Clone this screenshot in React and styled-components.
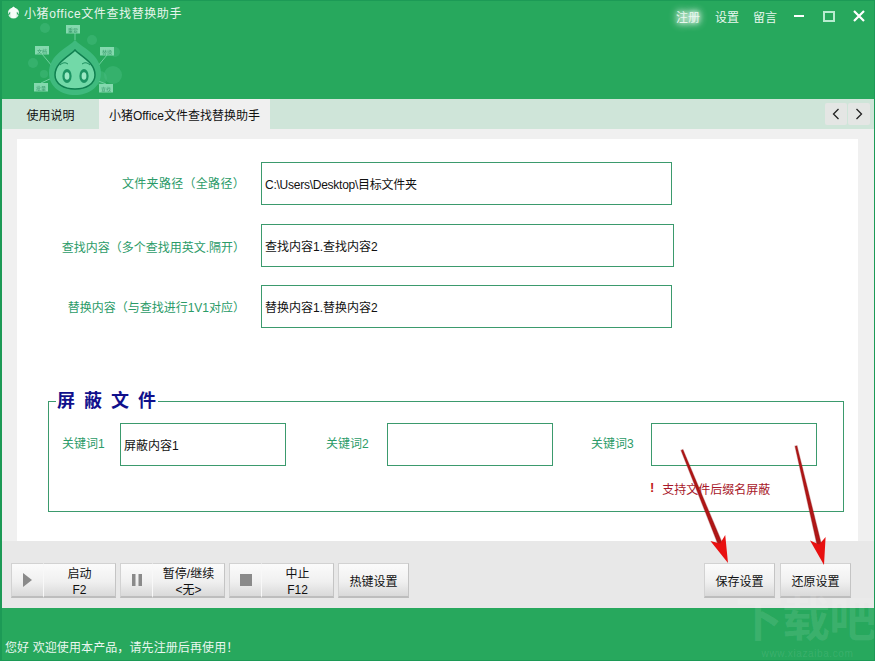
import React from "react";
import styled, { createGlobalStyle } from "styled-components";

const Global = createGlobalStyle`
  html, body { margin: 0; padding: 0; background: #27a85d; }
  * { box-sizing: border-box; }
`;

const fontStack = `"Liberation Sans", "Noto Sans CJK SC", sans-serif`;

const Window = styled.div`
  position: relative;
  width: 875px;
  height: 661px;
  display: flex;
  flex-direction: column;
  overflow: hidden;
  font-family: ${fontStack};
  font-size: 12px;
  color: #111;
  border: 1px solid #1c9a56;
  border-width: 1px 1px 1px 2px;
  background: #f0f0f0;
`;

const Header = styled.header`
  height: 98px;
  flex: none;
  background: #27a85d;
  display: flex;
  align-items: flex-start;
  justify-content: space-between;
  position: relative;
`;

const TitleGroup = styled.div`
  display: flex;
  flex-direction: column;
`;

const TitleRow = styled.div`
  display: flex;
  align-items: center;
  gap: 4px;
  padding: 1px 0 0 5px;
  height: 21px;
  color: #e6f5ec;
  font-size: 12px;
  letter-spacing: 0.6px;
`;

const Mascot = styled.svg`
  margin: -4px 0 0 26px;
  display: block;
  filter: blur(0.35px);
`;

const NavGroup = styled.nav`
  display: flex;
  align-items: center;
  height: 30px;
  padding-right: 9px;
`;

const NavLink = styled.span`
  font-size: 12px;
  color: #e8f7ee;
  width: 24px;
  margin-right: ${(p) => p.$gap}px;
  white-space: nowrap;
  text-shadow: ${(p) => (p.$glow ? "0 0 5px #fff, 0 0 8px #fff, 0 0 10px #fff" : "none")};
`;

const WinControl = styled.svg`
  display: block;
  margin-left: ${(p) => p.$gap}px;
`;

const TabBar = styled.div`
  height: 30px;
  flex: none;
  display: flex;
  background: #cfe5d9;
  position: relative;
`;

const Tab = styled.div`
  width: ${(p) => p.$w}px;
  display: flex;
  align-items: center;
  justify-content: center;
  font-size: 12px;
  background: ${(p) => (p.$active ? "#f0f0f0" : "transparent")};
  color: #111;
`;

const ScrollButtons = styled.div`
  margin: 4px 4px 0 auto;
  display: flex;
  gap: 1px;
  height: 22px;
`;

const ScrollButton = styled.div`
  width: 22px;
  height: 22px;
  background: #e4e6e4;
  border-radius: 2px;
  display: flex;
  align-items: center;
  justify-content: center;
`;

const Body = styled.main`
  flex: none;
  height: 412px;
  padding: 10px 15px 0 15px;
  background: #f0f0f0;
`;

const Panel = styled.section`
  background: #fff;
  height: 402px;
  width: 841px;
  padding-top: 23px;
  display: flex;
  flex-direction: column;
`;

const FormRow = styled.div`
  display: flex;
  align-items: center;
  height: ${(p) => p.$h}px;
  margin-bottom: ${(p) => p.$mb}px;
`;

const RowLabel = styled.label`
  width: 228px;
  text-align: right;
  color: #2b9b68;
  font-size: 12px;
  flex: none;
  white-space: nowrap;
  letter-spacing: ${(p) => p.$ls || 0}px;
  position: relative;
  top: ${(p) => p.$dy || 0}px;
`;

const TextBox = styled.div`
  margin-left: ${(p) => p.$ml ?? 16}px;
  width: ${(p) => p.$w}px;
  height: ${(p) => p.$h}px;
  border: 1px solid #3b9a6d;
  background: #fff;
  color: #111;
  font-size: 12px;
  letter-spacing: ${(p) => (p.$tight ? "-0.25px" : "0")};
  display: flex;
  align-items: center;
  padding-left: 3px;
  white-space: nowrap;
`;

const Group = styled.fieldset`
  margin: 0 0 0 31px;
  width: 796px;
  height: 122px;
  padding: 0;
  border: 1px solid #3b9a6d;
  position: relative;
  min-width: 0;
`;

const GroupLegend = styled.legend`
  margin-left: 7px;
  padding: 0 0 0 1px;
  font-size: 18px;
  line-height: 22px;
  font-weight: 700;
  color: #10108c;
  letter-spacing: 9px;
  white-space: nowrap;
  font-family: "Noto Sans CJK SC", serif;
  span { display: inline-block; margin-right: -7px; position: relative; top: -2px; }
`;

const KeywordRow = styled.div`
  display: flex;
  align-items: flex-start;
  padding: 11px 0 0 13px;
`;

const KeywordField = styled.div`
  display: flex;
  align-items: center;
  width: ${(p) => p.$w}px;
`;

const KeywordLabel = styled.span`
  color: #2b9b68;
  font-size: 12px;
  width: 58px;
  flex: none;
  white-space: nowrap;
  margin-top: -4px;
`;

const Notice = styled.div`
  margin: 14px 0 0 601px;
  color: #a8182a;
  font-size: 12px;
  display: flex;
  gap: 8px;
`;

const Bang = styled.b`
  color: #c21a1a;
  font-size: 13px;
  line-height: 16px;
`;

const Toolbar = styled.div`
  height: 67px;
  flex: none;
  background: #e8e8e8;
  display: flex;
  align-items: flex-start;
  padding: 22px 23px 0 9px;
  gap: 4px;
`;

const raised = `
  height: 35px;
  background: linear-gradient(#fbfbfb, #f0f0f0 55%, #d9d9d9);
  border: 1px solid #d2d2d2;
  border-bottom: 2px solid #bdbdbd;
  border-right-color: #c4c4c4;
  display: flex;
  align-items: center;
  justify-content: center;
  font-size: 12px;
  color: #111;
`;

const RunButton = styled.div`
  width: 105px;
  display: flex;
`;

const IconPart = styled.div`
  ${raised}
  width: 32px;
  flex: none;
  border-right: none;
`;

const TextPart = styled.div`
  ${raised}
  flex: 1;
  flex-direction: column;
  line-height: 16px;
  padding-top: 3px;
  border-left: 1px solid #f8f8f8;
`;

const PlainButton = styled.div`
  ${raised}
  width: 71px;
  margin-left: ${(p) => p.$ml || 0}px;
`;

const Spacer = styled.div`
  flex: 1;
`;

const Footer = styled.footer`
  flex: 1;
  background: #27a85d;
  display: flex;
  align-items: flex-end;
  padding: 0 0 5px 3px;
  color: #eaf7ef;
  font-size: 12px;
  letter-spacing: 0.1px;
`;

const Overlay = styled.svg`
  position: absolute;
  left: -2px;
  top: -1px;
  pointer-events: none;
`;

const Watermark = styled.div`
  position: absolute;
  right: -1px;
  bottom: 0;
  width: 135px;
  text-align: center;
  color: rgba(255, 255, 255, 0.1);
  font-family: ${fontStack};
  font-weight: 700;
  pointer-events: none;
`;

const WatermarkBig = styled.div`
  font-size: 48px;
  line-height: 56px;
  white-space: nowrap;
  letter-spacing: -1px;
  margin-left: -5px;
`;

const WatermarkSmall = styled.div`
  font-size: 10px;
  line-height: 12px;
  font-weight: 400;
  letter-spacing: 0.6px;
`;

const bubbles = [
  [45, 11, "重要"],
  [14, 32, "文档"],
  [79, 33, "替换"],
  [13, 69, "批量"],
  [78, 70, "查找"],
];

const spots = [
  [17, 10, 5],
  [5, 45, 5],
  [64, 22, 5],
  [87, 34, 5],
  [85, 57, 9],
  [72, 60, 7],
  [16, 56, 4],
];

const MascotArt = () => (
  <Mascot width="100" height="80" viewBox="0 0 100 80">
    {spots.map(([x, y, r]) => (
      <circle key={`${x}-${y}`} cx={x} cy={y} r={r} fill="#4bbf85" opacity=".4" />
    ))}
    <path d="M47 15 V22 M14 36 L24 48 M79 37 L70 48 M13 65 L24 60 M78 66 L68 62" stroke="#6fd09f" strokeWidth="1" fill="none" />
    <path d="M47 22 C53 29 73 36 73 55 C73 69 61 77 47 77 C33 77 21 69 21 55 C21 36 41 29 47 22Z" fill="#3fba7e" />
    <path d="M47 32 C52 38 67 44 67 57 C67 66 58 71 47 71 C36 71 27 66 27 57 C27 44 42 38 47 32Z" fill="#72d9a8" stroke="#0f7f50" strokeWidth="1.5" />
    <path d="M32 47 Q36 43 40 46 M54 46 Q58 43 62 47" fill="none" stroke="#1c8f5e" strokeWidth="1" />
    <ellipse cx="39" cy="58" rx="4.6" ry="7" fill="#1c9463" />
    <ellipse cx="56" cy="58" rx="4.6" ry="7" fill="#1c9463" />
    <ellipse cx="39" cy="58" rx="2.4" ry="3.8" fill="#9be8c4" />
    <ellipse cx="56" cy="58" rx="2.4" ry="3.8" fill="#9be8c4" />
    {bubbles.map(([x, y, t]) => (
      <g key={t}>
        <rect x={x - 7} y={y - 4} width="14" height="8.5" fill="#84d9ae" />
        <text x={x} y={y + 2.5} fontSize="5" textAnchor="middle" fill="#3a9c6e">{t}</text>
      </g>
    ))}
  </Mascot>
);

const AppIcon = () => (
  <svg width="13" height="13" viewBox="0 0 13 13">
    <circle cx="6.5" cy="7" r="5.5" fill="#dff2e8" />
    <path d="M6.5 0.5 L12 5.5 L9.5 5.5 L8.5 12 H4.5 L3.5 5.5 H1Z" fill="#f8fdfa" />
    <path d="M3 6.5 L1.5 9 M10 6.5 L11.5 9" stroke="#27a85d" strokeWidth="1.2" />
  </svg>
);

const Arrow = ({ x1, y1, x2, y2 }) => {
  const a = Math.atan2(y2 - y1, x2 - x1);
  const d = (180 * a) / Math.PI;
  const len = Math.hypot(x2 - x1, y2 - y1);
  return (
    <g transform={`translate(${x1} ${y1}) rotate(${d})`}>
      <path d={`M0 -1 L${len - 18} -2.2 L${len - 18} 2.2 L0 1Z`} fill="#b01616" stroke="#8f1a1a" strokeOpacity=".35" strokeWidth="1.2" />
      <path d={`M${len} 0 L${len - 27} -8 L${len - 21} 0 L${len - 27} 8Z`} fill="#e81010" />
    </g>
  );
};

export default function App() {
  return (
    <Window>
      <Global />
      <Header>
        <TitleGroup>
          <TitleRow>
            <AppIcon />
            <span>小猪office文件查找替换助手</span>
          </TitleRow>
          <MascotArt />
        </TitleGroup>
        <NavGroup>
          <NavLink $glow $gap={15}>注册</NavLink>
          <NavLink $gap={14}>设置</NavLink>
          <NavLink $gap={0}>留言</NavLink>
          <WinControl $gap={17} width="10" height="10" viewBox="0 0 10 10">
            <rect x="0" y="4" width="10" height="2" fill="#fff" />
          </WinControl>
          <WinControl $gap={19} width="12" height="11" viewBox="0 0 12 11">
            <rect x="1" y="1" width="10" height="9" fill="none" stroke="#b8ecd0" strokeWidth="2" />
          </WinControl>
          <WinControl $gap={18} width="12" height="12" viewBox="0 0 12 12">
            <path d="M1 1 L11 11 M11 1 L1 11" stroke="#fff" strokeWidth="2.2" />
          </WinControl>
        </NavGroup>
      </Header>
      <TabBar>
        <Tab $w={97}>使用说明</Tab>
        <Tab $w={171} $active>小猪Office文件查找替换助手</Tab>
        <ScrollButtons>
          <ScrollButton>
            <svg width="8" height="12" viewBox="0 0 8 12"><path d="M6.5 1 L1.5 6 L6.5 11" fill="none" stroke="#222" strokeWidth="1.3" /></svg>
          </ScrollButton>
          <ScrollButton>
            <svg width="8" height="12" viewBox="0 0 8 12"><path d="M1.5 1 L6.5 6 L1.5 11" fill="none" stroke="#222" strokeWidth="1.3" /></svg>
          </ScrollButton>
        </ScrollButtons>
      </TabBar>
      <Body>
        <Panel>
          <FormRow $h={43} $mb={19}>
            <RowLabel $dy={-1} $ls={0.3}>文件夹路径（全路径）</RowLabel>
            <TextBox $w={411} $h={43} $tight>C:\Users\Desktop\目标文件夹</TextBox>
          </FormRow>
          <FormRow $h={43} $mb={18}>
            <RowLabel $dy={1}>查找内容（多个查找用英文.隔开）</RowLabel>
            <TextBox $w={413} $h={43}>查找内容1.查找内容2</TextBox>
          </FormRow>
          <FormRow $h={43} $mb={62}>
            <RowLabel>替换内容（与查找进行1V1对应）</RowLabel>
            <TextBox $w={411} $h={43}>替换内容1.替换内容2</TextBox>
          </FormRow>
          <Group>
            <GroupLegend><span>屏蔽文件</span></GroupLegend>
            <KeywordRow>
              <KeywordField $w={264}>
                <KeywordLabel>关键词1</KeywordLabel>
                <TextBox $ml={0} $w={166} $h={43}>屏蔽内容1</TextBox>
              </KeywordField>
              <KeywordField $w={265}>
                <KeywordLabel>关键词2</KeywordLabel>
                <TextBox $ml={3} $w={166} $h={43} />
              </KeywordField>
              <KeywordField $w={226}>
                <KeywordLabel>关键词3</KeywordLabel>
                <TextBox $ml={2} $w={166} $h={43} />
              </KeywordField>
            </KeywordRow>
            <Notice><Bang>!</Bang><span>支持文件后缀名屏蔽</span></Notice>
          </Group>
        </Panel>
      </Body>
      <Toolbar>
        <RunButton>
          <IconPart>
            <svg width="12" height="16" viewBox="0 0 12 16"><path d="M1 1 L10 8 L1 15Z" fill="#8a8a8a" /></svg>
          </IconPart>
          <TextPart><span>启动</span><span>F2</span></TextPart>
        </RunButton>
        <RunButton>
          <IconPart>
            <svg width="12" height="14" viewBox="0 0 12 14"><rect x="1" y="1" width="3.5" height="12" fill="#8a8a8a" /><rect x="7.5" y="1" width="3.5" height="12" fill="#8a8a8a" /></svg>
          </IconPart>
          <TextPart><span>暂停/继续</span><span>&lt;无&gt;</span></TextPart>
        </RunButton>
        <RunButton>
          <IconPart>
            <svg width="12" height="12" viewBox="0 0 12 12"><rect width="12" height="12" fill="#8a8a8a" /></svg>
          </IconPart>
          <TextPart><span>中止</span><span>F12</span></TextPart>
        </RunButton>
        <PlainButton>热键设置</PlainButton>
        <Spacer />
        <PlainButton>保存设置</PlainButton>
        <PlainButton $ml={1}>还原设置</PlainButton>
      </Toolbar>
      <Footer>您好 欢迎使用本产品，请先注册后再使用！</Footer>
      <Watermark>
        <WatermarkBig>下载吧</WatermarkBig>
        <WatermarkSmall>www.xiazaiba.com</WatermarkSmall>
      </Watermark>
      <Overlay width="875" height="661" viewBox="0 0 875 661">
        <Arrow x1={682} y1={450} x2={728} y2={563} />
        <Arrow x1={796} y1={446} x2={824} y2={565} />
      </Overlay>
    </Window>
  );
}
